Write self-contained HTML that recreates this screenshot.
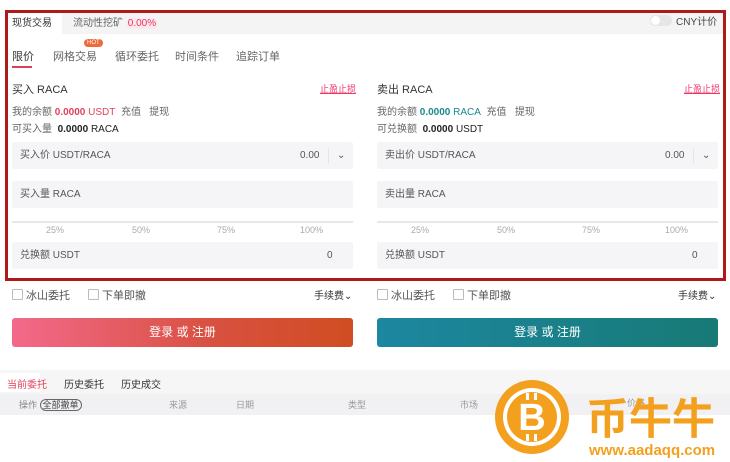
<!DOCTYPE html>
<html><head><meta charset="utf-8"><style>
*{margin:0;padding:0;box-sizing:border-box}
body{width:730px;height:462px;overflow:hidden;background:#fff;font-family:"Liberation Sans","Noto Sans CJK SC",sans-serif;font-size:10px;color:#333;position:relative}
.a{position:absolute;white-space:nowrap}
.box{position:absolute;left:5px;top:10px;width:721px;height:271px;border:3px solid #b0191c}
.inp{position:absolute;height:27px;background:#f5f5f7;border-radius:2px;color:#555;font-size:10px;line-height:27px;padding-left:8px}
.g{color:#666}
.cb{position:absolute;width:11px;height:11px;border:1px solid #bbb;border-radius:1px}
</style></head><body>
<div class="a" style="left:8px;top:13px;width:715px;height:21px;background:#f4f4f5"></div>
<div class="a" style="left:8px;top:13px;width:54px;height:21px;background:#fff"></div>
<div class="a" style="left:12px;top:14px;font-size:10px">现货交易</div>
<div class="a g" style="left:73px;top:14px">流动性挖矿 <span style="color:#e36;background:#fbe9ec;border-radius:6px;padding:0 2px">0.00%</span></div>
<div class="a" style="left:650px;top:15px;width:22px;height:11px;border-radius:6px;background:#e6e6e6"></div>
<div class="a" style="left:651px;top:16px;width:9px;height:9px;border-radius:50%;background:#fff"></div>
<div class="a" style="left:676px;top:13px;color:#444">CNY计价</div>

<div class="a" style="left:12px;top:48px;font-size:11px">限价</div>
<div class="a" style="left:12px;top:66px;width:20px;height:2px;background:#d9405a"></div>
<div class="a g" style="left:53px;top:48px;font-size:11px">网格交易</div>
<div class="a" style="left:84px;top:39px;background:#ef6a3a;color:#fff;font-size:6px;padding:0 3px;border-radius:4px;line-height:8px">HOT</div>
<div class="a g" style="left:115px;top:48px;font-size:11px">循环委托</div>
<div class="a g" style="left:175px;top:48px;font-size:11px">时间条件</div>
<div class="a g" style="left:236px;top:48px;font-size:11px">追踪订单</div>

<!-- buy -->
<div class="a" style="left:12px;top:81px;font-size:11px">买入 RACA</div>
<div class="a" style="left:320px;top:82px;color:#e36;font-size:9px;text-decoration:underline">止盈止损</div>
<div class="a g" style="left:12px;top:103px">我的余额 <b style="color:#e2405a">0.0000</b> <span style="color:#e2405a">USDT</span>&nbsp; 充值&nbsp;&nbsp; 提现</div>
<div class="a g" style="left:12px;top:120px">可买入量 &nbsp;<b style="color:#222">0.0000</b> <span style="color:#222">RACA</span></div>
<div class="inp" style="left:12px;top:142px;width:341px">买入价 USDT/RACA<span class="a" style="left:288px">0.00</span><span class="a" style="left:316px;top:6px;height:15px;border-left:1px solid #e4e4e4"></span><span class="a" style="left:325px;top:0">⌄</span></div>
<div class="inp" style="left:12px;top:181px;width:341px">买入量 RACA</div>
<div class="a" style="left:12px;top:221px;width:341px;height:2px;background:#e8e8e8"></div>
<div class="a" style="left:46px;top:225px;color:#aaa;font-size:9px">25%</div>
<div class="a" style="left:132px;top:225px;color:#aaa;font-size:9px">50%</div>
<div class="a" style="left:217px;top:225px;color:#aaa;font-size:9px">75%</div>
<div class="a" style="left:300px;top:225px;color:#aaa;font-size:9px">100%</div>
<div class="inp" style="left:12px;top:242px;width:341px">兑换额 USDT<span class="a" style="left:315px">0</span></div>

<!-- sell -->
<div class="a" style="left:377px;top:81px;font-size:11px">卖出 RACA</div>
<div class="a" style="left:684px;top:82px;color:#e36;font-size:9px;text-decoration:underline">止盈止损</div>
<div class="a g" style="left:377px;top:103px">我的余额 <b style="color:#1a8a8c">0.0000</b> <span style="color:#1a8a8c">RACA</span>&nbsp; 充值&nbsp;&nbsp; 提现</div>
<div class="a g" style="left:377px;top:120px">可兑换额 &nbsp;<b style="color:#222">0.0000</b> <span style="color:#222">USDT</span></div>
<div class="inp" style="left:377px;top:142px;width:341px">卖出价 USDT/RACA<span class="a" style="left:288px">0.00</span><span class="a" style="left:316px;top:6px;height:15px;border-left:1px solid #e4e4e4"></span><span class="a" style="left:325px;top:0">⌄</span></div>
<div class="inp" style="left:377px;top:181px;width:341px">卖出量 RACA</div>
<div class="a" style="left:377px;top:221px;width:341px;height:2px;background:#e8e8e8"></div>
<div class="a" style="left:411px;top:225px;color:#aaa;font-size:9px">25%</div>
<div class="a" style="left:497px;top:225px;color:#aaa;font-size:9px">50%</div>
<div class="a" style="left:582px;top:225px;color:#aaa;font-size:9px">75%</div>
<div class="a" style="left:665px;top:225px;color:#aaa;font-size:9px">100%</div>
<div class="inp" style="left:377px;top:242px;width:341px">兑换额 USDT<span class="a" style="left:315px">0</span></div>

<div class="box"></div>

<div class="cb" style="left:12px;top:289px"></div><div class="a" style="left:26px;top:287px;font-size:11px;color:#555">冰山委托</div>
<div class="cb" style="left:88px;top:289px"></div><div class="a" style="left:102px;top:287px;font-size:11px;color:#555">下单即撤</div>
<div class="a" style="left:314px;top:287px;font-size:10px">手续费⌄</div>
<div class="cb" style="left:377px;top:289px"></div><div class="a" style="left:391px;top:287px;font-size:11px;color:#555">冰山委托</div>
<div class="cb" style="left:453px;top:289px"></div><div class="a" style="left:467px;top:287px;font-size:11px;color:#555">下单即撤</div>
<div class="a" style="left:678px;top:287px;font-size:10px">手续费⌄</div>

<div class="a" style="left:12px;top:318px;width:341px;height:29px;border-radius:3px;background:linear-gradient(90deg,#f3698a,#d8503f 60%,#d04d22);color:#fff;font-size:12px;text-align:center;line-height:29px">登录 或 注册</div>
<div class="a" style="left:377px;top:318px;width:341px;height:29px;border-radius:3px;background:linear-gradient(90deg,#1c87a0,#187a76);color:#fff;font-size:12px;text-align:center;line-height:29px">登录 或 注册</div>

<div class="a" style="left:0;top:370px;width:730px;height:92px;background:#f6f6f7"></div>
<div class="a" style="left:0;top:373px;width:40px;height:19px;background:#fff"></div>
<div class="a" style="left:7px;top:376px;color:#e2405a;font-size:10px">当前委托</div>
<div class="a" style="left:64px;top:376px;font-size:10px">历史委托</div>
<div class="a" style="left:121px;top:376px;font-size:10px">历史成交</div>
<div class="a" style="left:0;top:394px;width:730px;height:21px;background:#f1f1f3"></div>
<div class="a" style="left:0;top:415px;width:730px;height:47px;background:#fff"></div>
<div class="a" style="left:19px;top:398px;color:#888;font-size:9px">操作 <span style="border:1px solid #666;border-radius:8px;padding:0 2px;color:#444">全部撤单</span></div>
<div class="a" style="left:169px;top:398px;color:#999;font-size:9px">来源</div>
<div class="a" style="left:236px;top:398px;color:#999;font-size:9px">日期</div>
<div class="a" style="left:348px;top:398px;color:#999;font-size:9px">类型</div>
<div class="a" style="left:460px;top:398px;color:#999;font-size:9px">市场</div>
<div class="a" style="left:627px;top:396px;color:#999;font-size:9px">价格</div>

<svg class="a" style="left:490px;top:375px" width="86" height="86" viewBox="0 0 86 86">
<circle cx="42" cy="42" r="37" fill="#f4a01f"/>
<circle cx="42" cy="42" r="29" fill="#fff"/>
<circle cx="42" cy="42" r="25" fill="#f4a01f"/>
<text x="42" y="55" text-anchor="middle" font-family="Liberation Sans" font-weight="bold" font-size="38" fill="#fff">B</text>
<rect x="36" y="18" width="3" height="7" fill="#fff"/><rect x="44" y="18" width="3" height="7" fill="#fff"/>
<rect x="36" y="59" width="3" height="7" fill="#fff"/><rect x="44" y="59" width="3" height="7" fill="#fff"/>
</svg>
<div class="a" style="left:586px;top:392px;font-size:43px;font-weight:bold;color:#f4a01f;line-height:48px;font-family:'Noto Sans CJK SC',sans-serif">币牛牛</div>
<div class="a" style="left:589px;top:442px;font-size:15px;font-weight:bold;color:#f4a01f;line-height:17px">www.aadaqq.com</div>
</body></html>
